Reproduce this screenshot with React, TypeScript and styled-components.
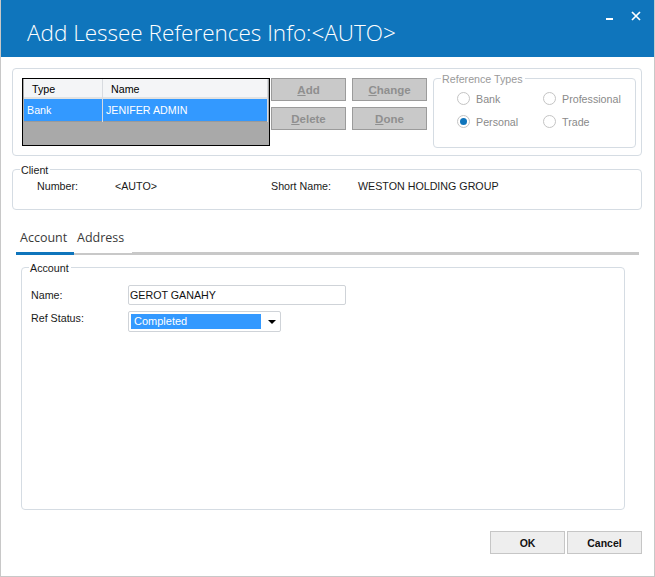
import React from 'react';
import styled, { createGlobalStyle } from 'styled-components';

const GlobalStyle = createGlobalStyle`
  html, body {
    margin: 0;
    padding: 0;
    background: #ffffff;
  }
  * {
    box-sizing: border-box;
  }
`;

const Window = styled.div`
  width: 655px;
  height: 577px;
  display: flex;
  flex-direction: column;
  background: #ffffff;
  border: 1px solid #c8c8c8;
  border-top: none;
  font-family: 'Liberation Sans', Arial, sans-serif;
  font-size: 10.7px;
  color: #1a1a1a;
  overflow: hidden;
`;

const TitleBar = styled.header`
  height: 57px;
  margin: 0 -1px;
  flex: none;
  display: flex;
  justify-content: space-between;
  background: #0f75bc;
  color: #ffffff;
`;

const Title = styled.h1`
  margin: 19px 0 0 27px;
  font-family: 'Open Sans', sans-serif;
  font-size: 22.5px;
  line-height: 28px;
  font-weight: 300;
`;

const WindowControls = styled.div`
  display: flex;
  align-items: flex-start;
  gap: 17px;
  padding: 11px 14px 0 0;
`;

const Content = styled.main`
  flex: 1;
  display: flex;
  flex-direction: column;
  padding: 11px 12px 0 11px;
`;

const GroupBox = styled.section<{ $h: number }>`
  position: relative;
  height: ${p => p.$h}px;
  border: 1px solid #d5dce3;
  border-radius: 4px;
  flex: none;
`;

const Legend = styled.span<{ $x: number; $muted?: boolean }>`
  position: absolute;
  top: -7px;
  left: ${p => p.$x}px;
  padding: 0 2px 0 1px;
  line-height: 14px;
  background: #ffffff;
  color: ${p => (p.$muted ? '#9a9a9a' : '#1a1a1a')};
`;

const TopRow = styled.div`
  display: flex;
  padding: 9px 5px 0 9px;
`;

const ListView = styled.div`
  width: 248px;
  height: 68px;
  margin-right: 1px;
  border: 1px solid #000000;
  background: #a9a9a9;
  flex: none;
`;

const ListRow = styled.div<{ $head?: boolean }>`
  display: grid;
  grid-template-columns: 79px 1fr;
  height: ${p => (p.$head ? 20 : 23)}px;
  width: 244px;
  margin-left: 1px;
  align-items: center;
  background: ${p => (p.$head ? '#f4f5f7' : '#3399ff')};
  color: ${p => (p.$head ? '#000000' : '#ffffff')};
  border-bottom: ${p => (p.$head ? '2px solid #e2e2e2' : '1px solid #9a9a9a')};
`;

const ListCell = styled.span<{ $pad: number; $lh: number }>`
  padding-left: ${p => p.$pad}px;
  height: 100%;
  line-height: ${p => p.$lh}px;
  border-right: 1px solid #d8dbe0;
`;

const ButtonGrid = styled.div`
  display: grid;
  grid-template-columns: 75px 75px;
  grid-template-rows: 23px 23px;
  column-gap: 6px;
  row-gap: 6px;
  flex: none;
`;

const ActionButton = styled.button`
  padding: 0;
  font: bold 11.5px 'Liberation Sans', Arial, sans-serif;
  color: #8f8f8f;
  background: #c9c9c9;
  border: 1px solid #9b9b9b;
`;

const TypesBox = styled(GroupBox)`
  width: 203px;
  margin-left: 6px;
`;

const RadioGrid = styled.div`
  display: grid;
  grid-template-columns: 86px 1fr;
  grid-auto-rows: 23px;
  padding: 8px 0 0 23px;
`;

const RadioItem = styled.label`
  display: flex;
  align-items: center;
  gap: 6px;
  color: #8a8a8a;
  white-space: nowrap;
`;

const RadioDot = styled.span<{ $on?: boolean }>`
  width: 13px;
  height: 13px;
  flex: none;
  border-radius: 50%;
  border: 1px solid #c4c4c4;
  background: #ffffff;
  display: flex;
  align-items: center;
  justify-content: center;
  &::after {
    content: '';
    display: ${p => (p.$on ? 'block' : 'none')};
    width: 7px;
    height: 7px;
    border-radius: 50%;
    background: #0f75bc;
  }
`;

const ClientBox = styled(GroupBox)`
  margin-top: 13px;
  display: grid;
  grid-template-columns: 78px 156px 87px 1fr;
  padding: 9px 0 0 24px;
  align-content: start;
  line-height: 14px;
`;

const Tabs = styled.nav`
  display: flex;
  margin: 17px 3px 0 4px;
  height: 28px;
  flex: none;
  align-items: flex-end;
`;

const Tab = styled.div<{ $active?: boolean; $w: number }>`
  width: ${p => p.$w}px;
  height: ${p => (p.$active ? 28 : 27)}px;
  padding: ${p => (p.$active ? 2 : 1)}px 0 0 ${p => (p.$active ? 4 : 3)}px;
  border-bottom: ${p => (p.$active ? 3 : 2)}px solid ${p => (p.$active ? '#0f75bc' : '#c8c8c8')};
  font-family: 'Open Sans', sans-serif;
  font-size: 12.5px;
  line-height: 18px;
  color: #3a3a3a;
`;

const TabRest = styled.div`
  flex: 1;
  height: 3px;
  background: #c8c8c8;
`;

const AccountBox = styled(GroupBox)`
  margin: 12px 17px 0 9px;
  padding: 17px 0 0 9px;
`;

const FormRow = styled.div<{ $mt: number }>`
  display: flex;
  align-items: flex-start;
  margin-top: ${p => p.$mt}px;
`;

const FormLabel = styled.label<{ $pt: number }>`
  width: 97px;
  padding-top: ${p => p.$pt}px;
  line-height: 14px;
  flex: none;
`;

const TextField = styled.div`
  width: 218px;
  height: 20px;
  padding-left: 1px;
  line-height: 19px;
  border: 1px solid #cfd3d8;
  border-radius: 2px;
  color: #111111;
`;

const ComboBox = styled.div`
  width: 153px;
  height: 21px;
  padding: 2px;
  display: flex;
  align-items: stretch;
  border: 1px solid #cfd3d8;
  border-radius: 2px;
`;

const ComboValue = styled.div`
  width: 130px;
  padding-left: 3px;
  line-height: 15px;
  font-size: 11px;
  background: #3399ff;
  color: #ffffff;
`;

const ComboArrow = styled.div`
  flex: 1;
  display: flex;
  align-items: center;
  justify-content: center;
  padding-left: 5px;
  &::after {
    content: '';
    margin-top: 1px;
    border-left: 4px solid transparent;
    border-right: 4px solid transparent;
    border-top: 4px solid #000000;
  }
`;

const Footer = styled.footer`
  display: flex;
  justify-content: flex-end;
  gap: 2px;
  margin-top: 21px;
`;

const DialogButton = styled.button`
  width: 75px;
  height: 23px;
  padding: 0;
  font: bold 10.5px 'Liberation Sans', Arial, sans-serif;
  color: #111111;
  background: #eeeeee;
  border: 1px solid #c6c6c6;
`;

export default function App() {
  return (
    <Window>
      <GlobalStyle />
      <TitleBar>
        <Title>Add Lessee References Info:&lt;AUTO&gt;</Title>
        <WindowControls>
          <svg width="8" height="14" viewBox="0 0 8 14">
            <rect x="0" y="7" width="7" height="2" fill="#fff" />
          </svg>
          <svg width="10" height="10" viewBox="0 0 10 10">
            <path d="M1 1l8 8M9 1l-8 8" stroke="#fff" strokeWidth="1.7" fill="none" />
          </svg>
        </WindowControls>
      </TitleBar>
      <Content>
        <GroupBox $h={88}>
          <TopRow>
            <ListView>
              <ListRow $head>
                <ListCell $pad={8} $lh={20}>Type</ListCell>
                <ListCell $pad={8} $lh={20}>Name</ListCell>
              </ListRow>
              <ListRow>
                <ListCell $pad={3} $lh={23}>Bank</ListCell>
                <ListCell $pad={3} $lh={23}>JENIFER ADMIN</ListCell>
              </ListRow>
            </ListView>
            <ButtonGrid>
              <ActionButton><u>A</u>dd</ActionButton>
              <ActionButton><u>C</u>hange</ActionButton>
              <ActionButton><u>D</u>elete</ActionButton>
              <ActionButton><u>D</u>one</ActionButton>
            </ButtonGrid>
            <TypesBox $h={70}>
              <Legend $x={7} $muted>Reference Types</Legend>
              <RadioGrid>
                <RadioItem><RadioDot />Bank</RadioItem>
                <RadioItem><RadioDot />Professional</RadioItem>
                <RadioItem><RadioDot $on />Personal</RadioItem>
                <RadioItem><RadioDot />Trade</RadioItem>
              </RadioGrid>
            </TypesBox>
          </TopRow>
        </GroupBox>
        <ClientBox $h={41}>
          <Legend $x={7}>Client</Legend>
          <span>Number:</span>
          <span>&lt;AUTO&gt;</span>
          <span>Short Name:</span>
          <span>WESTON HOLDING GROUP</span>
        </ClientBox>
        <Tabs>
          <Tab $active $w={58}>Account</Tab>
          <Tab $w={58}>Address</Tab>
          <TabRest />
        </Tabs>
        <AccountBox $h={243}>
          <Legend $x={7}>Account</Legend>
          <FormRow $mt={0}>
            <FormLabel $pt={3}>Name:</FormLabel>
            <TextField>GEROT GANAHY</TextField>
          </FormRow>
          <FormRow $mt={6}>
            <FormLabel $pt={0}>Ref Status:</FormLabel>
            <ComboBox>
              <ComboValue>Completed</ComboValue>
              <ComboArrow />
            </ComboBox>
          </FormRow>
        </AccountBox>
        <Footer>
          <DialogButton>OK</DialogButton>
          <DialogButton>Cancel</DialogButton>
        </Footer>
      </Content>
    </Window>
  );
}
